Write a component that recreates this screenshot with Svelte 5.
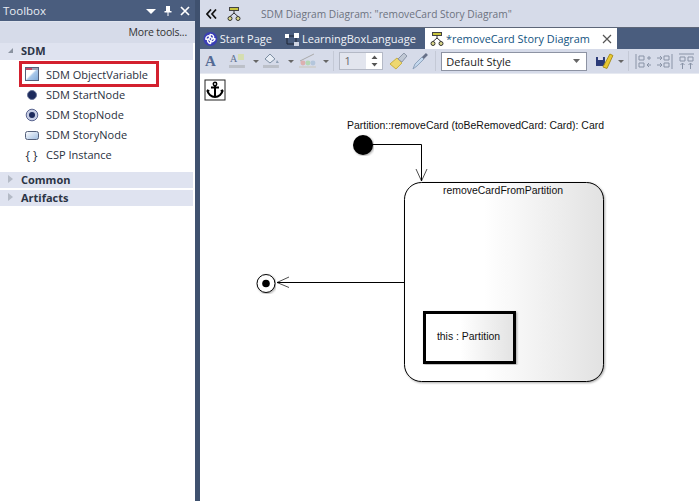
<script lang="ts">
  const tools = [
    { label: "SDM ObjectVariable", icon: "object", selected: true },
    { label: "SDM StartNode", icon: "start" },
    { label: "SDM StopNode", icon: "stop" },
    { label: "SDM StoryNode", icon: "story" },
    { label: "CSP Instance", icon: "csp" },
  ];
</script>

{#snippet treeIcon()}
  <svg width="16" height="16" viewBox="0 0 16 16">
    <rect x="3.500" y="1.500" width="9" height="3" fill="#c8c43c" stroke="#444" />
    <path d="M8 4.500v3M8 7 4 10.500M8 7l4 3.500" fill="none" stroke="#333" />
    <circle cx="4" cy="12.500" r="2" fill="#dcd98a" stroke="#333" />
    <circle cx="12" cy="12.500" r="2" fill="#dcd98a" stroke="#333" />
  </svg>
{/snippet}

<div class="app">
  <aside class="toolbox">
    <header class="tb-head">
      <span>Toolbox</span>
      <div class="tb-actions">
        <svg width="10" height="10" viewBox="0 0 10 10"><path d="M0 3h10L5 8z" fill="#fff" /></svg>
        <svg width="10" height="12" viewBox="0 0 10 12"><path d="M3 1h4v5h1.500v1.500h-3V11h-1V7.500h-3V6H3z" fill="#fff" /></svg>
        <svg width="10" height="10" viewBox="0 0 10 10"><path d="M1 1l8 8M9 1 1 9" stroke="#fff" stroke-width="1.700" /></svg>
      </div>
    </header>
    <div class="more">More tools...</div>
    <div class="group open"><span class="tri-open"></span>SDM</div>
    <ul class="items">
      {#each tools as t}
        <li class:selected={t.selected}>
          <span class="ico">
            {#if t.icon === "object"}
              <svg width="14" height="14" viewBox="0 0 14 14">
                <defs><linearGradient id="ob" x1="0" y1="0" x2="1" y2="1"><stop offset="0.450" stop-color="#fff" /><stop offset="0.550" stop-color="#a9c8ea" /><stop offset="1" stop-color="#7fa9d8" /></linearGradient></defs>
                <rect x="0.500" y="0.500" width="13" height="13" fill="url(#ob)" stroke="#55607a" />
                <rect x="1" y="1" width="12" height="2" fill="#9aa2b4" />
                <rect x="1" y="1" width="6" height="2" fill="#c04a68" />
              </svg>
            {:else if t.icon === "start"}
              <svg width="14" height="14" viewBox="0 0 14 14"><circle cx="7" cy="7" r="4.500" fill="#1c2a5c" stroke="#6a7598" /></svg>
            {:else if t.icon === "stop"}
              <svg width="14" height="14" viewBox="0 0 14 14"><circle cx="7" cy="7" r="5.800" fill="#c6cde4" stroke="#5a6590" /><circle cx="7" cy="7" r="3" fill="#1c2a5c" /></svg>
            {:else if t.icon === "story"}
              <svg width="14" height="12" viewBox="0 0 14 12">
                <defs><linearGradient id="st" x1="0" y1="0" x2="1" y2="1"><stop offset="0" stop-color="#fff" /><stop offset="1" stop-color="#9fbce0" /></linearGradient></defs>
                <rect x="0.500" y="2.500" width="13" height="8" rx="2" fill="url(#st)" stroke="#55607a" />
              </svg>
            {:else}
              <span class="braces">{"{ }"}</span>
            {/if}
          </span>
          <span class="txt">{t.label}</span>
        </li>
      {/each}
    </ul>
    <div class="group"><span class="tri-closed"></span>Common</div>
    <div class="group second"><span class="tri-closed"></span>Artifacts</div>
  </aside>

  <main class="editor">
    <div class="titlebar">
      <svg class="chev" width="11" height="10" viewBox="0 0 11 10"><path d="M5 .5 1 5l4 4.500M10 .5 6 5l4 4.500" fill="none" stroke="#111" stroke-width="1.700" /></svg>
      <span class="title-ico">{@render treeIcon()}</span>
      <span class="title">SDM Diagram Diagram: "removeCard Story Diagram"</span>
    </div>
    <div class="tabs">
      <div class="tab first">
        <svg width="16" height="16" viewBox="0 0 16 16">
          <circle cx="8" cy="8" r="7.500" fill="#3b3fb5" />
          <path d="M3 8c0-3 3-5 5-2s5 1 5 2-3 5-5 2-5-1-5-2z" fill="none" stroke="#fff" stroke-width="1.500" />
          <path d="M8 3c3 0 5 3 2 5s-1 5-2 5-5-3-2-5 1-5 2-5z" fill="none" stroke="#fff" stroke-width="1.500" />
        </svg>
        Start Page
      </div>
      <div class="tab">
        <svg width="16" height="16" viewBox="0 0 16 16">
          <rect x="1" y="3" width="4" height="4" fill="#fff" /><rect x="10" y="2" width="5" height="5" fill="#fff" />
          <rect x="10" y="11" width="5" height="4" fill="#cdd3e2" /><path d="M5 5h5M12 7v4M3 7v6h7" stroke="#1c2433" fill="none" />
        </svg>
        LearningBoxLanguage
      </div>
      <div class="tab active">
        {@render treeIcon()}
        <span>*removeCard Story Diagram</span>
        <svg class="close" width="10" height="10" viewBox="0 0 10 10"><path d="M1 1l8 8M9 1l-8 8" stroke="#555" stroke-width="1.200" /></svg>
      </div>
    </div>
    <div class="toolbar">
      <span class="font-a">A</span>
      <svg width="24" height="18" viewBox="0 0 24 18"><text x="1" y="10" font-size="10" fill="#5c7090" font-family="Liberation Serif">A</text><rect x="9" y="2" width="6" height="6" fill="#d5deb0" /><rect x="0" y="13" width="16" height="3" fill="#bcc0c8" /></svg>
      <span class="drop"></span>
      <svg width="25" height="18" viewBox="0 0 25 18"><path d="M2 7l5-5 5 5-5 4z" fill="#e8edf5" stroke="#7a8ca0" /><path d="M14 8l2 3h-3z" fill="#8fa0b4" /><rect x="0" y="13" width="16" height="3" fill="#bcc0c8" /></svg>
      <span class="drop"></span>
      <svg width="25" height="18" viewBox="0 0 25 18"><path d="M2 9 16 2" stroke="#a8a8a8" /><circle cx="5" cy="11" r="2.500" fill="#dcb0b0" /><circle cx="10" cy="11" r="2.500" fill="#b4d8b4" /><circle cx="15" cy="11" r="2.500" fill="#b4c6dc" /><rect x="1" y="14" width="17" height="2" fill="#d0d0d0" /></svg>
      <span class="drop"></span>
      <span class="sep"></span>
      <div class="spin"><span class="num">1</span><span class="arrows">
        <svg width="7" height="16" viewBox="0 0 7 16"><path d="M.5 6 3.500 2.500 6.500 6zM.5 10l3 3.500 3-3.500z" fill="#555" /></svg>
      </span></div>
      <svg class="brush" width="20" height="20" viewBox="0 0 20 20"><path d="M1 13 8 7l5 5-6 6z" fill="#eed870" stroke="#c8ae40" /><path d="M9 8l6-6 3 3-5 6z" fill="#c0c8d4" stroke="#8a94a6" /></svg>
      <svg class="dropper" width="18" height="20" viewBox="0 0 18 20"><path d="M2 18l2-5 7-7 2 2-7 7z" fill="#c4d8ee" stroke="#8ca0ba" /><path d="M11 6l4-4 2 2-4 4z" fill="#667088" /></svg>
      <span class="sep"></span>
      <div class="select"><span>Default Style</span><svg width="7" height="4" viewBox="0 0 7 4"><path d="M0 0h7L3.500 4z" fill="#666" /></svg></div>
      <svg class="save" width="20" height="18" viewBox="0 0 20 18"><rect x="1" y="5" width="9" height="9" fill="#2a3a78" /><rect x="3" y="5" width="5" height="3" fill="#dde" /><path d="M8 15 15 2l3 1.500-6 13z" fill="#e8c830" stroke="#a88f20" /></svg>
      <span class="drop"></span>
      <span class="sep"></span>
      <svg class="align" width="17" height="17" viewBox="0 0 17 17"><path d="M1 1v15M4 3h5v4H4zM4 10h5v4H4zM12 5h4M14 3v4M16 12h-4m2-2-2 2 2 2" fill="none" stroke="#8993a6" /></svg>
      <svg class="align" width="17" height="17" viewBox="0 0 17 17"><path d="M16 1v15M8 3h5v4H8zM8 10h5v4H8zM1 5h5m-2-2 2 2-2 2M1 12h5m-2-2 2 2-2 2" fill="none" stroke="#8993a6" /></svg>
      <svg class="align" width="17" height="17" viewBox="0 0 17 17"><path d="M1 1h15M2 4h5v4H2zM10 4h5v4h-5zM4.500 16v-6m-2 2 2-2 2 2M12.500 16v-6m-2 2 2-2 2 2" fill="none" stroke="#8993a6" /></svg>
    </div>
    <div class="canvas">
      <svg class="anchor" width="22" height="22" viewBox="0 0 22 22">
        <rect x="1" y="1" width="20" height="20" fill="#fff" stroke="#222" />
        <circle cx="11" cy="5" r="1.700" fill="none" stroke="#000" stroke-width="1.500" />
        <path d="M7 8.500h8M11 6.500V18M3.500 11c0 4 4 7 7.500 7s7.500-3 7.500-7" fill="none" stroke="#000" stroke-width="2" />
        <path d="M2.500 13l1-3 2.500 2zM19.500 13l-1-3-2.500 2z" fill="#000" />
      </svg>
      <svg class="diagram" width="499" height="427" viewBox="200 74 499 427">
        <defs>
          <linearGradient id="node" x1="0" y1="0" x2="1" y2="0">
            <stop offset="0.4" stop-color="#fff" /><stop offset="1" stop-color="#e2e2e2" />
          </linearGradient>
          <filter id="sh" x="-5%" y="-5%" width="110%" height="110%">
            <feDropShadow dx="1" dy="1" stdDeviation="0.800" flood-color="#000" flood-opacity="0.350" />
          </filter>
        </defs>
        <text x="347" y="129" class="lbl">Partition::removeCard (toBeRemovedCard: Card): Card</text>
        <circle cx="363" cy="145" r="10" fill="#000" filter="url(#sh)" />
        <path d="M372 144.500h49.500V181" fill="none" stroke="#000" />
        <path d="M416 169l5.500 12 5.500-12" fill="none" stroke="#000" stroke-width="0.700" />
        <rect x="404.500" y="182.500" width="199" height="199" rx="17" fill="url(#node)" stroke="#000" filter="url(#sh)" />
        <text x="503" y="194" text-anchor="middle" class="lbl">removeCardFromPartition</text>
        <path d="M404 282.500H277" fill="none" stroke="#000" />
        <path d="M289 277l-12 5.500 12 5" fill="none" stroke="#000" stroke-width="0.700" />
        <circle cx="266" cy="283.500" r="9" fill="#fff" stroke="#000" filter="url(#sh)" />
        <circle cx="266" cy="283.500" r="3.800" fill="#000" />
        <rect x="424.500" y="312.500" width="90" height="50" fill="url(#node)" stroke="#000" stroke-width="3" filter="url(#sh)" />
        <text x="468.500" y="340" text-anchor="middle" class="lbl">this : Partition</text>
      </svg>
    </div>
  </main>
</div>

<style>
  :global(body) {
    margin: 0;
    background: #fff;
  }
  .app {
    display: grid;
    grid-template-columns: 195px 1fr;
    width: 699px;
    height: 501px;
    overflow: hidden;
    font-family: "Open Sans", "Noto Sans", sans-serif;
    font-size: 11px;
    color: #1e1e1e;
  }
  .toolbox {
    background: #fff;
    border-right: 5px solid #3f516f;
    width: 200px;
    box-sizing: border-box;
    position: relative;
    z-index: 1;
  }
  .tb-head {
    display: flex;
    justify-content: space-between;
    align-items: center;
    height: 22px;
    box-sizing: border-box;
    padding: 0 5px 0 3px;
    background: #4a5d7e;
    color: #e8ecf4;
    font-size: 11.500px;
    border-bottom: 1px solid #dfe4ee;
  }
  .tb-actions {
    display: flex;
    align-items: center;
    gap: 7px;
  }
  .more {
    height: 21px;
    line-height: 21px;
    text-align: right;
    padding-right: 8px;
    background: #d6dbe9;
    font-size: 10.500px;
    letter-spacing: -0.200px;
    color: #333;
  }
  .group {
    display: flex;
    align-items: center;
    height: 16px;
    box-sizing: border-box;
    padding-bottom: 2px;
    margin-right: 2px;
    background: #dfe3f0;
    font-weight: 700;
    font-size: 11px;
    color: #2b3445;
    gap: 8px;
    padding-left: 8px;
  }
  .group.open {
    height: 17px;
    margin-bottom: 1px;
  }
  .group.second {
    margin-top: 2px;
  }
  .tri-open {
    width: 0;
    height: 0;
    border-left: 5px solid transparent;
    border-bottom: 5px solid #8b93a0;
  }
  .tri-closed {
    width: 0;
    height: 0;
    border-top: 4px solid transparent;
    border-bottom: 4px solid transparent;
    border-left: 5px solid #b4bac6;
  }
  .items {
    list-style: none;
    margin: 0 0 7px;
    padding: 0;
  }
  .items li {
    display: flex;
    align-items: center;
    gap: 8px;
    height: 20px;
    padding-left: 25px;
    font-size: 11px;
    color: #2a3140;
    box-sizing: border-box;
  }
  .items li .txt {
    margin-bottom: 2px;
  }
  .items li.selected .txt {
    margin-bottom: 0;
  }
  .items li.selected {
    height: 26px;
    margin: 0 0 -2px 19px;
    padding-left: 3px;
    width: 140px;
    border: 3px solid #d3202e;
    position: relative;
  }
  .ico {
    display: flex;
    justify-content: center;
    align-items: center;
    width: 13px;
  }
  .ico svg {
    flex: none;
  }
  .braces {
    font-size: 12px;
    white-space: nowrap;
  }
  .editor {
    display: flex;
    flex-direction: column;
    min-width: 0;
    margin-left: 5px;
  }
  .titlebar {
    display: flex;
    align-items: center;
    height: 27px;
    flex: none;
    background: #d6dbe9;
    padding-left: 6px;
  }
  .chev {
    margin-right: 9px;
  }
  .title-ico {
    display: flex;
    width: 35px;
  }
  .title {
    font-size: 10.200px;
    color: #6c7280;
  }
  .tabs {
    display: flex;
    align-items: flex-end;
    height: 22px;
    flex: none;
    box-sizing: border-box;
    background: #4a5d7e;
    border-top: 1px solid #5d6678;
    white-space: nowrap;
  }
  .tab {
    display: flex;
    align-items: center;
    gap: 2px;
    height: 21px;
    padding: 0 9px 0 3px;
    color: #f0f3f8;
    font-size: 11px;
  }
  .tab.first {
    width: 81px;
    box-sizing: border-box;
  }
  .tab.active {
    position: absolute;
    left: 425px;
    width: 192px;
    box-sizing: border-box;
    background: #fff;
    color: #12537f;
    padding: 0 0 0 4px;
    gap: 1px;
    font-size: 10.900px;
  }
  .close {
    margin-left: 11px;
  }
  .toolbar {
    display: flex;
    align-items: center;
    height: 25px;
    flex: none;
    background: #d6dbe9;
    padding-left: 5px;
    border-bottom: 1px solid #e6e9f1;
    box-sizing: border-box;
    white-space: nowrap;
  }
  .font-a {
    font-family: "Liberation Serif", serif;
    font-weight: 700;
    font-size: 15px;
    color: #536a94;
    width: 24px;
  }
  .drop {
    width: 0;
    height: 0;
    border-left: 3px solid transparent;
    border-right: 3px solid transparent;
    border-top: 3px solid #666;
    margin-right: 4px;
  }
  .sep {
    width: 1px;
    height: 20px;
    background: #c4c9d6;
    margin-right: 5px;
  }
  .spin {
    display: flex;
    width: 45px;
    height: 18px;
    border: 1px solid #b4b9c6;
    background: #e2e5ee;
    box-sizing: border-box;
    justify-content: space-between;
    font-size: 11px;
    line-height: 16px;
    color: #666;
    padding-left: 5px;
    margin-right: 6px;
  }
  .arrows {
    background: #fff;
    width: 16px;
    display: flex;
    justify-content: center;
    align-items: center;
  }
  .brush {
    margin-right: 2px;
  }
  .dropper {
    margin-right: 6px;
  }
  .select {
    display: flex;
    align-items: center;
    justify-content: space-between;
    width: 146px;
    height: 19px;
    padding: 0 6px 0 4px;
    box-sizing: border-box;
    border: 1px solid #8d93a3;
    background: #fff;
    font-size: 11px;
    color: #222;
    margin-right: 8px;
  }
  .save {
    margin-right: 3px;
  }
  .toolbar .sep:nth-last-of-type(1) {
    margin-right: 6px;
  }
  .align {
    flex: none;
    margin-right: 4.500px;
  }
  .canvas {
    position: relative;
    flex: 1;
    background: #fff;
  }
  .anchor {
    position: absolute;
    left: 4px;
    top: 5px;
  }
  .diagram {
    position: absolute;
    left: 0;
    top: 0;
  }
  .lbl {
    font-family: "Liberation Sans", Arial, sans-serif;
    font-size: 10.450px;
    fill: #111;
  }
</style>
